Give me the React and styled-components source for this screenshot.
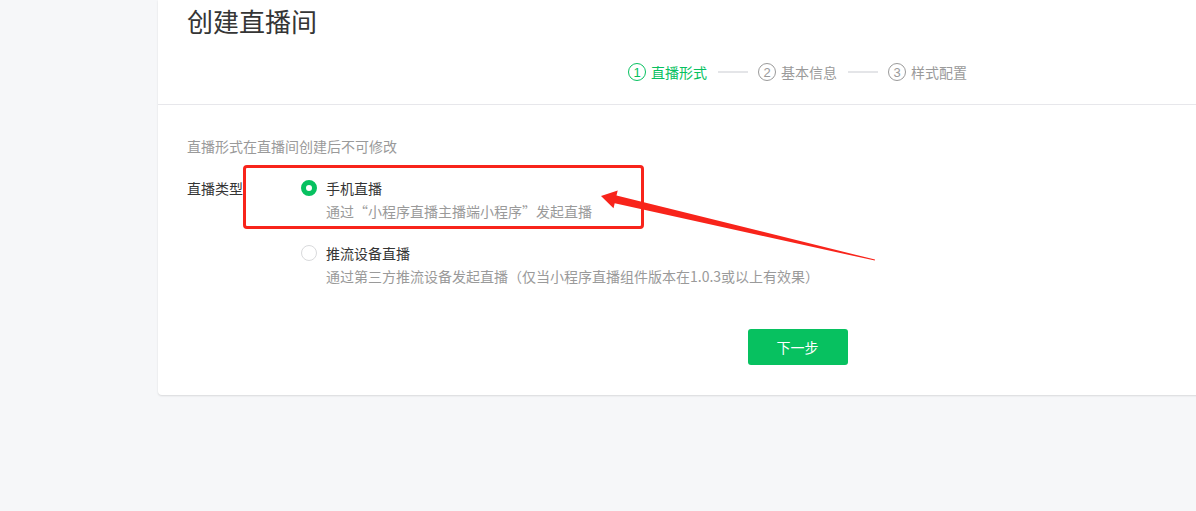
import styled, { createGlobalStyle } from 'styled-components';

const GlobalStyle = createGlobalStyle`
  html, body {
    margin: 0;
    padding: 0;
    background: #f6f7f9;
    overflow: hidden;
  }
  body {
    font-family: 'Noto Sans CJK SC', 'Noto Sans', sans-serif;
    font-size: 14px;
    color: #353535;
  }
`;

const steps = [
  { num: 1, text: '直播形式' },
  { num: 2, text: '基本信息' },
  { num: 3, text: '样式配置' }
];

const options = [
  {
    title: '手机直播',
    desc: '通过“小程序直播主播端小程序”发起直播',
    checked: true
  },
  {
    title: '推流设备直播',
    desc: '通过第三方推流设备发起直播（仅当小程序直播组件版本在1.0.3或以上有效果）',
    checked: false
  }
];

export default function App() {
  const current = 1;
  return (
    <Page>
      <GlobalStyle />
      <Card>
        <Header>
          <Title>创建直播间</Title>
          <Steps>
            {steps.map((s, i) => (
              <StepGroup key={s.num}>
                {i > 0 && <StepLine />}
                <Step active={s.num === current}>
                  <StepNum active={s.num === current}>{s.num}</StepNum>
                  <span>{s.text}</span>
                </Step>
              </StepGroup>
            ))}
          </Steps>
        </Header>
        <Body>
          <Tip>直播形式在直播间创建后不可修改</Tip>
          <FormRow>
            <FormLabel>直播类型</FormLabel>
            <OptionList>
              {options.map((o) => (
                <Option key={o.title}>
                  <OptionHead>
                    <Radio checked={o.checked} />
                    <OptionTitle>{o.title}</OptionTitle>
                  </OptionHead>
                  <OptionDesc>{o.desc}</OptionDesc>
                </Option>
              ))}
            </OptionList>
          </FormRow>
          <Actions>
            <NextButton type='button'>下一步</NextButton>
          </Actions>
        </Body>
      </Card>

      {/* screenshot annotation */}
      <MarkBox />
      <Arrow width='1196' height='511' viewBox='0 0 1196 511'>
        <polygon
          points='601,196 617.7,190.6 616.5,195.5 875,259.6 874.8,260.6 614.7,203.3 613.5,208.2'
          fill='#f8241b'
        />
      </Arrow>
    </Page>
  );
}

const Page = styled.div`
  position: relative;
  width: 1196px;
  height: 511px;
  overflow: hidden;
`;

const Card = styled.div`
  margin-left: 158px;
  width: 1279px;
  background: #fff;
  border-radius: 0 0 4px 4px;
  box-shadow: 0 1px 2px rgba(0, 0, 0, 0.12);
`;

const Header = styled.div`
  padding: 3px 0 22px 29px;
  border-bottom: 1px solid #e7e7eb;
`;

const Title = styled.h1`
  margin: 0;
  font-size: 26px;
  line-height: 36px;
  font-weight: 400;
  color: #353535;
`;

const Steps = styled.div`
  display: flex;
  justify-content: center;
  align-items: center;
  margin-top: 23px;
  margin-left: -29px;
  line-height: 20px;
`;

const StepGroup = styled.div`
  display: flex;
  align-items: center;
`;

const StepLine = styled.div`
  width: 30px;
  height: 2px;
  background: #e4e5e8;
  margin: 0 10px 0 11px;
`;

const Step = styled.div`
  display: flex;
  align-items: center;
  gap: 5px;
  color: ${(p) => (p.active ? '#07c160' : '#9a9a9a')};
  font-size: 14px;
`;

const StepNum = styled.span`
  box-sizing: border-box;
  width: 18px;
  height: 18px;
  border-radius: 50%;
  border: 1px solid ${(p) => (p.active ? '#07c160' : '#9a9a9a')};
  display: flex;
  align-items: center;
  justify-content: center;
  font-family: 'Liberation Sans', sans-serif;
  font-size: 13px;
  line-height: 1;
`;

const Body = styled.div`
  padding: 31px 0 30px 29px;
`;

const Tip = styled.p`
  margin: 0;
  line-height: 20px;
  color: #9a9a9a;
`;

const FormRow = styled.div`
  display: flex;
  margin-top: 22px;
`;

const FormLabel = styled.div`
  width: 114px;
  line-height: 20px;
  color: #353535;
`;

const OptionList = styled.div`
  display: flex;
  flex-direction: column;
  gap: 22px;
`;

const Option = styled.div`
  display: flex;
  flex-direction: column;
`;

const OptionHead = styled.div`
  display: flex;
  align-items: center;
  gap: 9px;
  line-height: 20px;
`;

const Radio = styled.span`
  box-sizing: border-box;
  width: 16px;
  height: 16px;
  border-radius: 50%;
  background: #fff;
  border: ${(p) => (p.checked ? '5px solid #07c160' : '1px solid #d9dadc')};
`;

const OptionTitle = styled.span`
  color: #353535;
`;

const OptionDesc = styled.div`
  margin: 3px 0 0 25px;
  line-height: 20px;
  color: #9a9a9a;
`;

const Actions = styled.div`
  display: flex;
  justify-content: center;
  margin: 43px 0 0 -29px;
`;

const NextButton = styled.button`
  width: 100px;
  height: 36px;
  border: none;
  border-radius: 3px;
  background: #07c160;
  color: #fff;
  font-family: inherit;
  font-size: 14px;
  cursor: pointer;
`;

const MarkBox = styled.div`
  position: absolute;
  left: 243px;
  top: 165px;
  width: 401px;
  height: 64px;
  box-sizing: border-box;
  border: 3px solid #f8241b;
  border-radius: 4px;
`;

const Arrow = styled.svg`
  position: absolute;
  left: 0;
  top: 0;
  pointer-events: none;
`;
